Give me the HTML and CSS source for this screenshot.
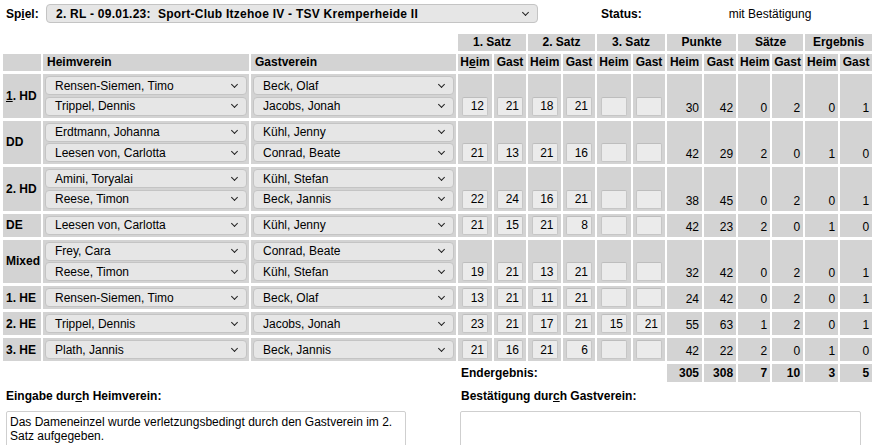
FILE: index.html
```html
<!DOCTYPE html>
<html>
<head>
	<meta charset="utf-8">
	<title>Spielbericht</title>
	<link rel="stylesheet" href="styles.css">
</head>
<body>

<div class="head">
	<span class="lbl">Sp<u>i</u>el:</span>
	<div class="pick game">2. RL - 09.01.23:&nbsp; Sport-Club Itzehoe IV - TSV Kremperheide II</div>
	<span class="lbl status">Status:</span>
	<span class="status-val">mit Bestätigung</span>
</div>

<table class="score">
	<colgroup>
		<col style="width:38px"><col style="width:206px"><col style="width:205px">
		<col style="width:34px"><col style="width:32px"><col style="width:33px"><col style="width:32px">
		<col style="width:34px"><col style="width:32px"><col style="width:35px"><col style="width:32px">
		<col style="width:32px"><col style="width:31px"><col style="width:33px"><col style="width:32px">
	</colgroup>
	<thead>
		<tr>
			<th class="blank"></th><th class="blank"></th><th class="blank"></th>
			<th colspan="2">1. Satz</th>
			<th colspan="2">2. Satz</th>
			<th colspan="2">3. Satz</th>
			<th colspan="2">Punkte</th>
			<th colspan="2">Sätze</th>
			<th colspan="2">Ergebnis</th>
		</tr>
		<tr>
			<th></th>
			<th class="who">Heimverein</th>
			<th class="who">Gastverein</th>
			<th>H<u>e</u>im</th><th>Gast</th>
			<th>Heim</th><th>Gast</th>
			<th>Heim</th><th>Gast</th>
			<th>Heim</th><th>Gast</th>
			<th>Heim</th><th>Gast</th>
			<th>Heim</th><th>Gast</th>
		</tr>
	</thead>
	<tbody>
		<tr>
			<th class="tag"><u>1</u>. HD</th>
			<td><div class="pick">Rensen-Siemen, Timo</div><div class="pick">Trippel, Dennis</div></td>
			<td><div class="pick">Beck, Olaf</div><div class="pick">Jacobs, Jonah</div></td>
			<td class="set"><input class="pt" value="12"></td><td class="set"><input class="pt" value="21"></td>
			<td class="set"><input class="pt" value="18"></td><td class="set"><input class="pt" value="21"></td>
			<td class="set"><input class="pt" value=""></td><td class="set"><input class="pt" value=""></td>
			<td class="n">30</td><td class="n">42</td><td class="n">0</td><td class="n">2</td><td class="n">0</td><td class="n">1</td>
		</tr>
		<tr>
			<th class="tag">DD</th>
			<td><div class="pick">Erdtmann, Johanna</div><div class="pick">Leesen von, Carlotta</div></td>
			<td><div class="pick">Kühl, Jenny</div><div class="pick">Conrad, Beate</div></td>
			<td class="set"><input class="pt" value="21"></td><td class="set"><input class="pt" value="13"></td>
			<td class="set"><input class="pt" value="21"></td><td class="set"><input class="pt" value="16"></td>
			<td class="set"><input class="pt" value=""></td><td class="set"><input class="pt" value=""></td>
			<td class="n">42</td><td class="n">29</td><td class="n">2</td><td class="n">0</td><td class="n">1</td><td class="n">0</td>
		</tr>
		<tr>
			<th class="tag">2. HD</th>
			<td><div class="pick">Amini, Toryalai</div><div class="pick">Reese, Timon</div></td>
			<td><div class="pick">Kühl, Stefan</div><div class="pick">Beck, Jannis</div></td>
			<td class="set"><input class="pt" value="22"></td><td class="set"><input class="pt" value="24"></td>
			<td class="set"><input class="pt" value="16"></td><td class="set"><input class="pt" value="21"></td>
			<td class="set"><input class="pt" value=""></td><td class="set"><input class="pt" value=""></td>
			<td class="n">38</td><td class="n">45</td><td class="n">0</td><td class="n">2</td><td class="n">0</td><td class="n">1</td>
		</tr>
		<tr>
			<th class="tag">DE</th>
			<td><div class="pick">Leesen von, Carlotta</div></td>
			<td><div class="pick">Kühl, Jenny</div></td>
			<td class="set"><input class="pt" value="21"></td><td class="set"><input class="pt" value="15"></td>
			<td class="set"><input class="pt" value="21"></td><td class="set"><input class="pt" value="8"></td>
			<td class="set"><input class="pt" value=""></td><td class="set"><input class="pt" value=""></td>
			<td class="n">42</td><td class="n">23</td><td class="n">2</td><td class="n">0</td><td class="n">1</td><td class="n">0</td>
		</tr>
		<tr>
			<th class="tag">Mixed</th>
			<td><div class="pick">Frey, Cara</div><div class="pick">Reese, Timon</div></td>
			<td><div class="pick">Conrad, Beate</div><div class="pick">Kühl, Stefan</div></td>
			<td class="set"><input class="pt" value="19"></td><td class="set"><input class="pt" value="21"></td>
			<td class="set"><input class="pt" value="13"></td><td class="set"><input class="pt" value="21"></td>
			<td class="set"><input class="pt" value=""></td><td class="set"><input class="pt" value=""></td>
			<td class="n">32</td><td class="n">42</td><td class="n">0</td><td class="n">2</td><td class="n">0</td><td class="n">1</td>
		</tr>
		<tr>
			<th class="tag">1. HE</th>
			<td><div class="pick">Rensen-Siemen, Timo</div></td>
			<td><div class="pick">Beck, Olaf</div></td>
			<td class="set"><input class="pt" value="13"></td><td class="set"><input class="pt" value="21"></td>
			<td class="set"><input class="pt" value="11"></td><td class="set"><input class="pt" value="21"></td>
			<td class="set"><input class="pt" value=""></td><td class="set"><input class="pt" value=""></td>
			<td class="n">24</td><td class="n">42</td><td class="n">0</td><td class="n">2</td><td class="n">0</td><td class="n">1</td>
		</tr>
		<tr>
			<th class="tag">2. HE</th>
			<td><div class="pick">Trippel, Dennis</div></td>
			<td><div class="pick">Jacobs, Jonah</div></td>
			<td class="set"><input class="pt" value="23"></td><td class="set"><input class="pt" value="21"></td>
			<td class="set"><input class="pt" value="17"></td><td class="set"><input class="pt" value="21"></td>
			<td class="set"><input class="pt" value="15"></td><td class="set"><input class="pt" value="21"></td>
			<td class="n">55</td><td class="n">63</td><td class="n">1</td><td class="n">2</td><td class="n">0</td><td class="n">1</td>
		</tr>
		<tr>
			<th class="tag">3. HE</th>
			<td><div class="pick">Plath, Jannis</div></td>
			<td><div class="pick">Beck, Jannis</div></td>
			<td class="set"><input class="pt" value="21"></td><td class="set"><input class="pt" value="16"></td>
			<td class="set"><input class="pt" value="21"></td><td class="set"><input class="pt" value="6"></td>
			<td class="set"><input class="pt" value=""></td><td class="set"><input class="pt" value=""></td>
			<td class="n">42</td><td class="n">22</td><td class="n">2</td><td class="n">0</td><td class="n">1</td><td class="n">0</td>
		</tr>
		<tr class="total">
			<td class="blank"></td><td class="blank"></td><td class="blank"></td>
			<th class="blank end" colspan="6">Endergebnis:</th>
			<th class="n">305</th><th class="n">308</th><th class="n">7</th><th class="n">10</th><th class="n">3</th><th class="n">5</th>
		</tr>
	</tbody>
</table>

<div class="notes">
	<div>
		<div class="lbl">Eingabe dur<u>c</u>h Heimverein:</div>
		<textarea class="memo">Das Dameneinzel wurde verletzungsbedingt durch den Gastverein im 2. Satz aufgegeben.</textarea>
	</div>
	<div>
		<div class="lbl">Bestätigung dur<u>c</u>h Gastverein:</div>
		<textarea class="memo wide"></textarea>
	</div>
</div>

</body>
</html>
```

FILE: styles.css
```css
body {
	margin: 0;
	padding: 0 1px;
	font: 12px "Liberation Sans", Arial, sans-serif;
	color: #000;
	background: #fff;
}

.lbl {
	font-weight: bold;
}

.head {
	display: flex;
	align-items: center;
	height: 19px;
	padding: 4px 0 0 5px;
}

.head .lbl {
	width: 40px;
}

.game {
	width: 492px;
	font-weight: bold;
	letter-spacing: 0.25px;
	background: #f7f7f7;
}

.head .status {
	width: auto;
	margin-left: 63px;
}

.status-val {
	margin-left: 87px;
}

.pick {
	display: flex;
	align-items: center;
	justify-content: space-between;
	box-sizing: border-box;
	height: 19px;
	padding: 0 9px 0 9px;
	border: 1px solid #c4c4c4;
	border-radius: 4px;
	background: #e6e6e6;
	white-space: nowrap;
}

.pick + .pick {
	margin-top: 1.5px;
}

.pick::after {
	content: "";
	width: 4px;
	height: 4px;
	margin-top: -3px;
	border-right: 1.5px solid #222;
	border-bottom: 1.5px solid #222;
	transform: rotate(45deg);
}

.score {
	table-layout: fixed;
	width: 873px;
	border-spacing: 2px 3px;
	margin-top: 8px;
}

.score th,
.score td {
	box-sizing: border-box;
	background: #d3d3d3;
	padding: 2px;
}

.score thead th {
	padding: 1px 2px 2px;
	text-align: center;
}

.score thead th.who {
	text-align: left;
	padding-left: 4px;
}

.score .blank {
	background: none;
}

.tag {
	text-align: left;
	vertical-align: middle;
	padding-left: 3px !important;
	white-space: nowrap;
}

.set {
	text-align: center;
	vertical-align: bottom;
}

.pt {
	display: block;
	box-sizing: border-box;
	width: 26px;
	height: 19px;
	margin: 0 auto;
	padding: 0 3px 0 0;
	border: 1px solid #c6c6c6;
	border-top-color: #bdbdbd;
	border-radius: 2px;
	background: #ebebeb;
	font: 12px "Liberation Sans", Arial, sans-serif;
	color: #000;
	text-align: right;
}

.score .n {
	text-align: right;
	vertical-align: bottom;
	padding: 0 3px 3px 0;
}

.total th,
.total td {
	height: 18px;
}

.total .n {
	padding-bottom: 2px;
}

.score .end {
	text-align: left;
	padding-left: 3px;
	vertical-align: middle;
}

.notes {
	display: grid;
	grid-template-columns: 455px 1fr;
	padding-left: 5px;
	margin-top: 4px;
}

.memo {
	display: block;
	box-sizing: border-box;
	width: 400px;
	height: 50px;
	margin-top: 8px;
	padding: 3px 3px 2px;
	border: 1px solid #cfcfcf;
	border-radius: 2px;
	font: 12px "Liberation Sans", Arial, sans-serif;
	color: #000;
	resize: none;
}

.memo.wide {
	width: 401px;
	margin-left: -1px;
}
```
